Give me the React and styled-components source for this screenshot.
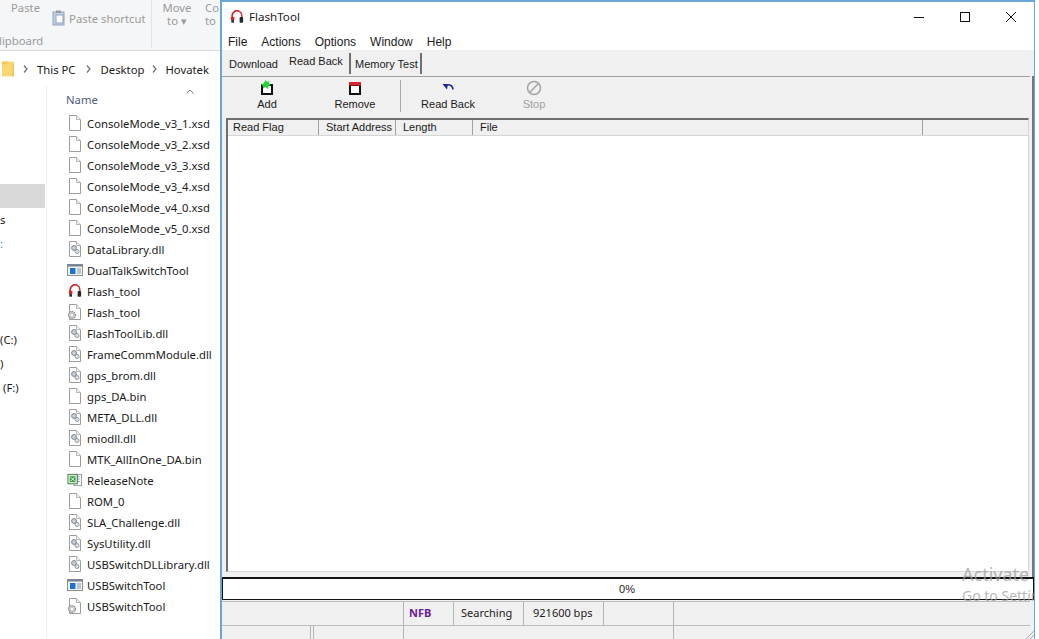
import styled, { createGlobalStyle } from 'styled-components';

const GlobalStyle = createGlobalStyle`
    html, body {
        margin: 0;
        padding: 0;
        background: #fff;
    }
    * {
        box-sizing: border-box;
    }
`;

const Page = styled.div`
    display: flex;
    width: 1039px;
    height: 639px;
    overflow: hidden;
    background: #fff;
    font-family: 'Noto Sans', 'Open Sans', sans-serif;
    font-size: 11.3px;
    color: #1a1a1a;
`;

/* explorer behind the flash tool */
const Explorer = styled.div`
    display: flex;
    flex-direction: column;
    flex: 0 0 220px;
    overflow: hidden;
`;

const Ribbon = styled.div`
    display: flex;
    flex: 0 0 51px;
    background: #f5f6f7;
    border-bottom: 1px solid #dadbdc;
    color: #9a9a9a;
    overflow: hidden;
`;

const ClipboardGroup = styled.div`
    display: flex;
    flex-direction: column;
    flex: 0 0 152px;
    min-width: 0;
    padding-top: 1px;
    border-right: 1px solid #e2e3e4;
    margin-bottom: 2px;
`;

const ClipboardTop = styled.div`
    display: flex;
    flex: 1;
`;

const PasteLabel = styled.span`
    flex: 0 0 27px;
    margin-left: 11px;
    line-height: 14px;
`;

const PasteShortcut = styled.div`
    display: flex;
    align-items: center;
    gap: 3px;
    margin: 9px 0 0 12px;
    height: 16px;
    white-space: nowrap;
`;

const GroupLabel = styled.div`
    line-height: 14px;
    margin-left: -1px;
    white-space: nowrap;
`;

const RibbonBtn = styled.div`
    display: flex;
    flex-direction: column;
    align-items: ${(p) => (p.$left ? 'flex-start' : 'center')};
    width: ${(p) => p.$width}px;
    margin-left: ${(p) => p.$gap}px;
    padding-top: 1px;
    line-height: 13px;
    white-space: nowrap;
`;

const AddressBar = styled.div`
    display: flex;
    align-items: center;
    flex: 0 0 35px;
    padding: 1px 0 0 2px;
    color: #1a1a1a;
`;

const Crumb = styled.span`
    white-space: nowrap;
`;

const Chevron = styled.svg`
    width: 5px;
    height: 8px;
    margin: ${(p) => p.$margin};
    fill: none;
    stroke: #6d6d6d;
    stroke-width: 1.2;
`;

const ExplorerBody = styled.div`
    display: flex;
    flex: 1;
    min-height: 0;
`;

const NavPane = styled.div`
    flex: 0 0 47px;
    padding-top: 98px;
    border-right: 1px solid #f0f0f0;
`;

const NavRow = styled.div`
    height: 24px;
    width: 45px;
    line-height: 24px;
    padding-left: ${(p) => p.$indent || 0}px;
    background: ${(p) => (p.$selected ? '#d9d9d9' : 'transparent')};
    color: ${(p) => p.$color || '#1a1a1a'};
    white-space: nowrap;
`;

const FilePane = styled.div`
    flex: 1;
    display: flex;
    flex-direction: column;
    min-width: 0;
`;

const NameHeader = styled.div`
    display: flex;
    align-items: flex-start;
    justify-content: space-between;
    flex: 0 0 27px;
    padding: 3px 26px 0 19px;
    color: #4c607e;
`;

const SortCaret = styled.svg`
    width: 8px;
    height: 5px;
    fill: none;
    stroke: #7a7a7a;
    stroke-width: 1;
`;

const NameLabel = styled.span`
    margin-top: 3px;
`;

const FileRow = styled.div`
    display: flex;
    align-items: center;
    height: 21px;
    padding: 0 0 1px 20px;
    white-space: nowrap;
`;

const FileIconSlot = styled.span`
    display: flex;
    justify-content: center;
    align-items: center;
    flex: 0 0 16px;
    margin-right: 4px;
`;

const RowIcon = styled.svg`
    display: block;
    width: ${(p) => p.$w || 16}px;
    height: ${(p) => p.$h || 16}px;
`;

/* flash tool window */
const Window = styled.div`
    position: relative;
    display: flex;
    flex-direction: column;
    flex: 0 0 815px;
    border: 1px solid #6ba7d6;
    border-width: 2px 1px 0 2px;
    background: #f0f0f0;
    overflow: hidden;
`;

const TitleBar = styled.div`
    display: flex;
    align-items: center;
    flex: 0 0 31px;
    padding: 0 0 2px 8px;
    background: #fff;
    font-size: 11.6px;
`;

const Title = styled.span`
    margin-left: 5px;
    flex: 1;
`;

const WinButton = styled.div`
    display: flex;
    align-items: center;
    justify-content: center;
    width: 46px;
    height: 29px;
`;

const MenuBar = styled.div`
    display: flex;
    align-items: center;
    flex: 0 0 17px;
    background: #fff;
    padding-left: 6px;
    gap: 14px;
    font-family: 'Liberation Sans', Arial, sans-serif;
    font-size: 12px;
`;

const TabStrip = styled.div`
    display: flex;
    flex: 0 0 26px;
    padding-left: 1px;
    font-family: 'Liberation Sans', Arial, sans-serif;
    font-size: 11px;
`;

const Tab = styled.div`
    display: flex;
    align-items: ${(p) => (p.$active ? 'flex-start' : 'center')};
    width: ${(p) => p.$width}px;
    height: 21px;
    margin-top: 3px;
    padding-left: ${(p) => p.$pad}px;
    padding-top: ${(p) => (p.$active ? 2 : 0)}px;
    border-right: ${(p) => (p.$edge ? '2px solid #707070' : '0')};
    white-space: nowrap;
`;

const Workspace = styled.div`
    flex: 1;
    display: flex;
    flex-direction: column;
    min-height: 0;
    border-right: 2px solid #777;
`;

const Toolbar = styled.div`
    display: flex;
    flex: 0 0 42px;
    margin-right: 2px;
    padding-left: 1px;
    border-top: 1px solid #a0a0a0;
    font-family: 'Liberation Sans', Arial, sans-serif;
    font-size: 11px;
`;

const ToolButton = styled.div`
    display: flex;
    flex-direction: column;
    align-items: center;
    justify-content: flex-start;
    gap: 2px;
    width: ${(p) => p.$width || 88}px;
    padding-top: 3px;
    color: ${(p) => (p.$disabled ? '#a0a0a0' : '#1a1a1a')};
`;

const ToolIcon = styled.svg`
    width: 16px;
    height: 16px;
    display: block;
`;

const ToolSep = styled.div`
    width: 1px;
    margin: 3px 3px 6px 1px;
    background: #a8a8a8;
`;

const TableFrame = styled.div`
    flex: 1;
    display: flex;
    flex-direction: column;
    min-height: 0;
    margin: 0 3px 5px 4px;
    background: #fff;
    border-top: 2px solid #6e6e6e;
    border-left: 2px solid #6e6e6e;
    border-right: 1px solid #d8d8d8;
    border-bottom: 1px solid #d8d8d8;
`;

const TableHead = styled.div`
    display: flex;
    flex: 0 0 15px;
    background: #f0f0f0;
    border-bottom: 1px solid #d5d5d5;
    font-family: 'Liberation Sans', Arial, sans-serif;
    font-size: 11px;
`;

const HeadCell = styled.div`
    flex: ${(p) => (p.$width ? `0 0 ${p.$width}px` : '1')};
    padding-left: ${(p) => p.$pad || 7}px;
    line-height: 15px;
    border-right: ${(p) => (p.$width ? '1px solid #a0a0a0' : '0')};
    white-space: nowrap;
`;

const ProgressBar = styled.div`
    display: flex;
    align-items: center;
    justify-content: center;
    flex: 0 0 23px;
    background: #fff;
    border: 1px solid #111;
    border-top-width: 2px;
    padding-right: 2px;
    font-family: 'Liberation Sans', Arial, sans-serif;
    font-size: 11px;
`;

const StatusRow = styled.div`
    display: grid;
    grid-template-columns: ${(p) => p.$cols};
    flex: 0 0 ${(p) => p.$height}px;
    margin-top: ${(p) => p.$top || 0}px;
    border-top: 1px solid #bdbdbd;
    margin-right: 4px;
    font-size: 11px;
`;

const StatusCell = styled.div`
    display: flex;
    align-items: center;
    padding: 0 0 2px ${(p) => p.$pad || 0}px;
    border-right: ${(p) => (p.$edge ? '1px solid #b4b4b4' : '0')};
    color: ${(p) => p.$color || '#1a1a1a'};
    font-weight: ${(p) => (p.$bold ? 700 : 400)};
    white-space: nowrap;
`;

const Watermark = styled.div`
    position: absolute;
    left: 740px;
    top: 562px;
    display: flex;
    flex-direction: column;
    color: #9f9f9f;
    opacity: 0.75;
    white-space: nowrap;
    pointer-events: none;
`;

const WatermarkMain = styled.span`
    font-size: 18px;
    line-height: 20px;
`;

const WatermarkSub = styled.span`
    font-size: 14px;
    line-height: 24px;
`;

const Grip = styled.svg`
    position: absolute;
    right: 0;
    bottom: 0;
    width: 9px;
    height: 9px;
    fill: none;
    stroke: #a8a8a8;
`;

const PageIcon = ({ children }) => (
    <RowIcon viewBox="0 0 16 16" $h={18}>
        <path d="M2.5.5h7l4 4v11h-11z" fill="#fff" stroke="#9c9c9c" />
        <path d="M9.5.5v4h4" fill="#f2f2f2" stroke="#b5b5b5" />
        {children}
    </RowIcon>
);

const DllIcon = () => (
    <PageIcon>
        <circle cx="7" cy="7" r="2.4" fill="#c9d3dc" stroke="#76838f" />
        <circle cx="10" cy="10.5" r="2" fill="#dfe4e8" stroke="#8d98a2" />
    </PageIcon>
);

const GearPageIcon = () => (
    <PageIcon>
        <circle cx="5" cy="11" r="3.6" fill="#c7c7c7" stroke="#7b7b7b" strokeDasharray="1.5 .8" />
        <circle cx="5" cy="11" r="1.2" fill="#fff" />
    </PageIcon>
);

const AppWindowIcon = () => (
    <RowIcon viewBox="0 0 16 12" $h={12}>
        <rect x=".5" y=".5" width="15" height="11" fill="#f4f4f4" stroke="#8f8f8f" />
        <rect x=".5" y=".5" width="15" height="2" fill="#6f8296" />
        <rect x="3" y="4" width="5.5" height="6" fill="#1b74d4" />
        <path d="M10 5h4M10 7h4M10 9h4" stroke="#7f96ad" />
    </RowIcon>
);

const HeadsetIcon = () => (
    <RowIcon viewBox="0 0 16 16" $w={14} $h={14}>
        <path d="M2.500 8V6a5.500 5.500 0 0 1 8-4.500" fill="none" stroke="#d5232a" strokeWidth="2" />
        <path d="M10.500 1.500A5.500 5.500 0 0 1 13.500 6v2" fill="none" stroke="#d5232a" strokeWidth="1.600" />
        <rect x="1" y="8" width="4" height="3.500" fill="#d5232a" />
        <rect x="1.500" y="11.500" width="3" height="3" fill="#26292c" />
        <rect x="11" y="8" width="4" height="6.500" rx="1" fill="#26292c" />
    </RowIcon>
);

const SheetIcon = () => (
    <RowIcon viewBox="0 0 16 16" $h={15}>
        <rect x="7" y="1.5" width="8" height="12" fill="#fff" stroke="#8f9aa6" />
        <path d="M9 4h4M9 6.500h4M9 9h4" stroke="#7f96ad" />
        <rect x=".5" y="1.500" width="10" height="10" fill="#dceadb" stroke="#3f7f42" />
        <rect x="2.500" y="3.500" width="6" height="6" fill="#2f9b3a" />
        <path d="M3.500 4.500l4 4M7.500 4.500l-4 4" stroke="#fff" />
    </RowIcon>
);

const fileIcons = {
    file: PageIcon,
    dll: DllIcon,
    exe: AppWindowIcon,
    flash: HeadsetIcon,
    cfg: GearPageIcon,
    sheet: SheetIcon,
};

const files = [
    ['ConsoleMode_v3_1.xsd', 'file'],
    ['ConsoleMode_v3_2.xsd', 'file'],
    ['ConsoleMode_v3_3.xsd', 'file'],
    ['ConsoleMode_v3_4.xsd', 'file'],
    ['ConsoleMode_v4_0.xsd', 'file'],
    ['ConsoleMode_v5_0.xsd', 'file'],
    ['DataLibrary.dll', 'dll'],
    ['DualTalkSwitchTool', 'exe'],
    ['Flash_tool', 'flash'],
    ['Flash_tool', 'cfg'],
    ['FlashToolLib.dll', 'dll'],
    ['FrameCommModule.dll', 'dll'],
    ['gps_brom.dll', 'dll'],
    ['gps_DA.bin', 'file'],
    ['META_DLL.dll', 'dll'],
    ['miodll.dll', 'dll'],
    ['MTK_AllInOne_DA.bin', 'file'],
    ['ReleaseNote', 'sheet'],
    ['ROM_0', 'file'],
    ['SLA_Challenge.dll', 'dll'],
    ['SysUtility.dll', 'dll'],
    ['USBSwitchDLLibrary.dll', 'dll'],
    ['USBSwitchTool', 'exe'],
    ['USBSwitchTool', 'cfg'],
];

const navRows = [
    { label: '', selected: true },
    { label: 's' },
    { label: ':', color: '#2f9bb0' },
    { label: '' },
    { label: '' },
    { label: '' },
    { label: '(C:)' },
    { label: ')' },
    { label: '(F:)', indent: 3 },
];

const ChevronIcon = ({ margin }) => (
    <Chevron viewBox="0 0 5 8" $margin={margin}>
        <path d="M1 .5l3 3.500-3 3.500" />
    </Chevron>
);

const App = () => {
    return (
        <Page>
            <GlobalStyle />
            <Explorer>
                <Ribbon>
                    <ClipboardGroup>
                        <ClipboardTop>
                            <PasteLabel>Paste</PasteLabel>
                            <PasteShortcut>
                                <RowIcon viewBox="0 0 14 16" $w={14}>
                                    <rect x="1" y="2" width="11" height="13" fill="#c3d3e6" stroke="#8fa3bb" />
                                    <rect x="4" y="5" width="7" height="8" fill="#fff" stroke="#8fa3bb" />
                                    <rect x="4" y=".5" width="5" height="2.500" fill="#9a9a9a" />
                                </RowIcon>
                                Paste shortcut
                            </PasteShortcut>
                        </ClipboardTop>
                        <GroupLabel>lipboard</GroupLabel>
                    </ClipboardGroup>
                    <RibbonBtn $width={28} $gap={11}>
                        <span>Move</span>
                        <span>to ▾</span>
                    </RibbonBtn>
                    <RibbonBtn $width={20} $gap={14} $left>
                        <span>Co</span>
                        <span>to</span>
                    </RibbonBtn>
                </Ribbon>
                <AddressBar>
                    <RowIcon viewBox="0 0 14 18" $w={13} $h={18}>
                        <path d="M0 1h13v16H0z" fill="#fbd774" />
                        <path d="M0 1h6v3H0z" fill="#f5c64f" />
                        <path d="M12 4v13" stroke="#e0b050" />
                    </RowIcon>
                    <ChevronIcon margin="0 9px 0 8px" />
                    <Crumb>This PC</Crumb>
                    <ChevronIcon margin="0 10px 0 10px" />
                    <Crumb>Desktop</Crumb>
                    <ChevronIcon margin="0 8px 0 8px" />
                    <Crumb>Hovatek</Crumb>
                </AddressBar>
                <ExplorerBody>
                    <NavPane>
                        {navRows.map((row, i) => (
                            <NavRow key={i} $selected={row.selected} $color={row.color} $indent={row.indent}>
                                {row.label}
                            </NavRow>
                        ))}
                    </NavPane>
                    <FilePane>
                        <NameHeader>
                            <NameLabel>Name</NameLabel>
                            <SortCaret viewBox="0 0 8 5">
                                <path d="M.5 4.500L4 1l3.500 3.500" />
                            </SortCaret>
                        </NameHeader>
                        {files.map(([name, kind], i) => {
                            const Icon = fileIcons[kind];
                            return (
                                <FileRow key={i}>
                                    <FileIconSlot>
                                        <Icon />
                                    </FileIconSlot>
                                    {name}
                                </FileRow>
                            );
                        })}
                    </FilePane>
                </ExplorerBody>
            </Explorer>

            <Window>
                <TitleBar>
                    <HeadsetIcon />
                    <Title>FlashTool</Title>
                    <WinButton>
                        <RowIcon viewBox="0 0 12 12" $w={12} $h={12}>
                            <path d="M1 6.500h10" stroke="#111" />
                        </RowIcon>
                    </WinButton>
                    <WinButton>
                        <RowIcon viewBox="0 0 12 12" $w={12} $h={12}>
                            <rect x="1.500" y="1.500" width="9" height="9" fill="none" stroke="#111" />
                        </RowIcon>
                    </WinButton>
                    <WinButton>
                        <RowIcon viewBox="0 0 12 12" $w={12} $h={12}>
                            <path d="M1 1l10 10M11 1L1 11" stroke="#111" />
                        </RowIcon>
                    </WinButton>
                </TitleBar>
                <MenuBar>
                    <span>File</span>
                    <span>Actions</span>
                    <span>Options</span>
                    <span>Window</span>
                    <span>Help</span>
                </MenuBar>
                <TabStrip>
                    <Tab $width={60} $pad={6}>Download</Tab>
                    <Tab $width={68} $pad={6} $active $edge>Read Back</Tab>
                    <Tab $width={71} $pad={4} $edge>Memory Test</Tab>
                </TabStrip>
                <Workspace>
                    <Toolbar>
                        <ToolButton>
                            <ToolIcon viewBox="0 0 16 16">
                                <rect x="3" y="5" width="10" height="9" fill="#fff" stroke="#111" strokeWidth="2" />
                                <path d="M6.500 0l1.500 2 2.500-1L10 3.500 12 5 9.500 6l-.5 3-2.500-2L4 8.500 4 6 2 4.500 4.500 3.500z" fill="#27d23b" />
                            </ToolIcon>
                            Add
                        </ToolButton>
                        <ToolButton>
                            <ToolIcon viewBox="0 0 16 16">
                                <rect x="3" y="5" width="10" height="9" fill="#fff" stroke="#111" strokeWidth="2" />
                                <rect x="2" y="2" width="12" height="3.500" fill="#d8262c" />
                            </ToolIcon>
                            Remove
                        </ToolButton>
                        <ToolSep />
                        <ToolButton>
                            <ToolIcon viewBox="0 0 16 16">
                                <path d="M5 6.500C8 3.500 12.500 4.500 13 9.500" fill="none" stroke="#1c2c90" strokeWidth="1.600" />
                                <path d="M2.500 4l5.500 0-1 5.500z" fill="#1c2c90" />
                            </ToolIcon>
                            Read Back
                        </ToolButton>
                        <ToolButton $disabled $width={84}>
                            <ToolIcon viewBox="0 0 16 16">
                                <circle cx="8" cy="8" r="6.500" fill="none" stroke="#a6a6a6" strokeWidth="1.600" />
                                <path d="M3.500 12.500l9-9" stroke="#a6a6a6" strokeWidth="1.600" />
                            </ToolIcon>
                            Stop
                        </ToolButton>
                    </Toolbar>
                    <TableFrame>
                        <TableHead>
                            <HeadCell $width={91} $pad={5}>Read Flag</HeadCell>
                            <HeadCell $width={77}>Start Address</HeadCell>
                            <HeadCell $width={77}>Length</HeadCell>
                            <HeadCell $width={450}>File</HeadCell>
                            <HeadCell />
                        </TableHead>
                    </TableFrame>
                </Workspace>
                <ProgressBar>0%</ProgressBar>
                <StatusRow $cols="182px 50px 70px 80px 70px 1fr" $height={24} $top={1}>
                    <StatusCell $edge />
                    <StatusCell $edge $pad={5} $color="#6a1b9a" $bold>NFB</StatusCell>
                    <StatusCell $edge $pad={7}>Searching</StatusCell>
                    <StatusCell $edge $pad={9}>921600 bps</StatusCell>
                    <StatusCell $edge />
                    <StatusCell />
                </StatusRow>
                <StatusRow $cols="89px 3px 90px 270px 1fr" $height={14}>
                    <StatusCell $edge />
                    <StatusCell $edge />
                    <StatusCell $edge />
                    <StatusCell $edge />
                    <StatusCell />
                </StatusRow>
                <Watermark>
                    <WatermarkMain>Activate</WatermarkMain>
                    <WatermarkSub>Go to Settings</WatermarkSub>
                </Watermark>
                <Grip viewBox="0 0 9 9">
                    <path d="M9 1L1 9M9 5L5 9" />
                </Grip>
            </Window>
        </Page>
    );
};

export default App;
